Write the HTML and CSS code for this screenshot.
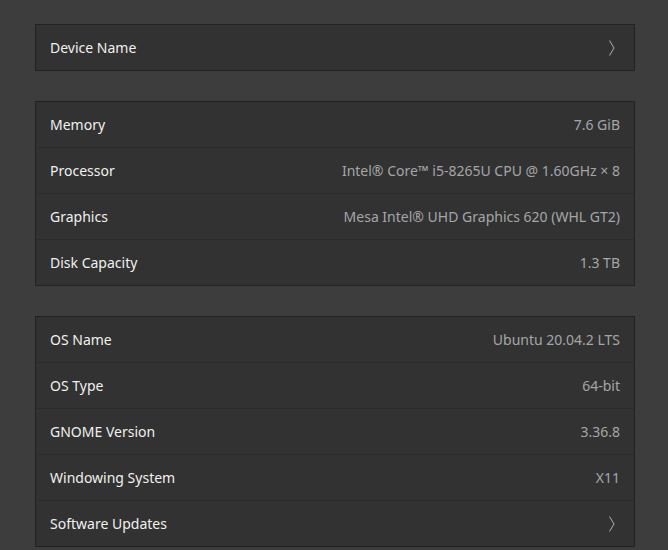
FILE: index.html
```html
<!DOCTYPE html>
<html>
<head>
<meta charset="utf-8">
<link rel="stylesheet" href="styles.css">
</head>
<body>
<div class="page">
  <div class="card">
    <div class="row"><span class="label">Device Name</span><svg class="chev" width="8" height="16" viewBox="0 0 8 16"><path d="M1.5 0.5 L6 8 L1.5 15.5" fill="none" stroke="#999999" stroke-width="1.1"/></svg></div>
  </div>
  <div class="card">
    <div class="row"><span class="label">Memory</span><span class="value">7.6 GiB</span></div>
    <div class="row"><span class="label">Processor</span><span class="value">Intel® Core™ i5-8265U CPU @ 1.60GHz × 8</span></div>
    <div class="row"><span class="label">Graphics</span><span class="value">Mesa Intel® UHD Graphics 620 (WHL GT2)</span></div>
    <div class="row"><span class="label">Disk Capacity</span><span class="value">1.3 TB</span></div>
  </div>
  <div class="card">
    <div class="row"><span class="label">OS Name</span><span class="value">Ubuntu 20.04.2 LTS</span></div>
    <div class="row"><span class="label">OS Type</span><span class="value">64-bit</span></div>
    <div class="row"><span class="label">GNOME Version</span><span class="value">3.36.8</span></div>
    <div class="row"><span class="label">Windowing System</span><span class="value">X11</span></div>
    <div class="row"><span class="label">Software Updates</span><svg class="chev" width="8" height="16" viewBox="0 0 8 16"><path d="M1.5 0.5 L6 8 L1.5 15.5" fill="none" stroke="#999999" stroke-width="1.1"/></svg></div>
  </div>
</div>
</body>
</html>
```

FILE: styles.css
```css
html, body {
  margin: 0;
  padding: 0;
  background: #3d3d3d;
  height: 100%;
}
body {
  font-family: "Noto Sans", "DejaVu Sans", sans-serif;
  font-size: 14px;
}
.page {
  padding: 24px 0 0 35px;
  display: flex;
  flex-direction: column;
  gap: 30px;
}
.card {
  width: 598px;
  background: #323232;
  border: 1px solid #222222;
  display: flex;
  flex-direction: column;
}
.row {
  height: 45px;
  display: flex;
  align-items: center;
  justify-content: space-between;
  padding: 0 14px 0 14px;
  border-top: 1px solid #2b2b2b;
}
.row:first-child {
  border-top: none;
}
.label {
  color: #f0f0ee;
}
.value {
  color: #a4a6a8;
}
.chev {
  margin-right: 4px;
}
```
